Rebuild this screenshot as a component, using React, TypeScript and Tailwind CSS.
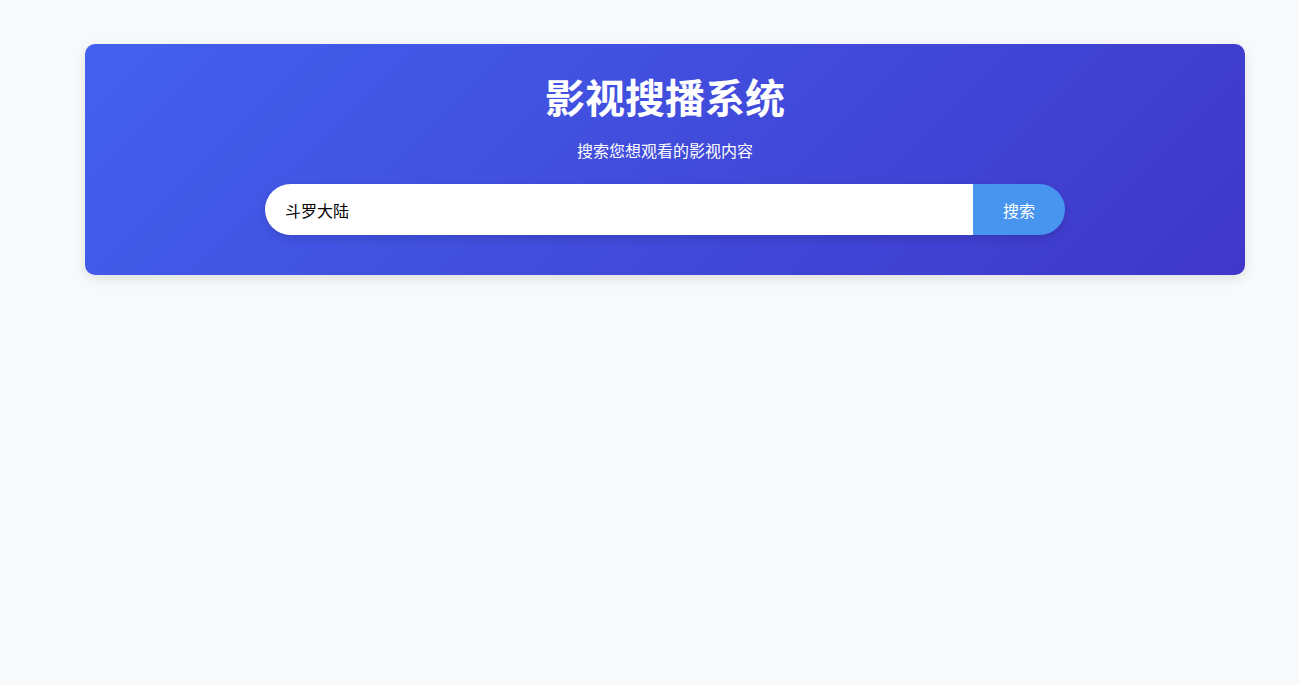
import React from "react";

export default function App() {
  return (
    <div
      className="min-h-[685px] w-full bg-[#f8f9fa] pt-[44px]"
      style={{ fontFamily: '"Noto Sans CJK SC", "Noto Sans", sans-serif' }}
    >
      <div className="ml-[85px] w-[1160px] rounded-[10px] bg-[linear-gradient(135deg,#4361ee,#3f37c9)] pt-[32px] pb-[40px] shadow-[0_4px_12px_rgba(0,0,0,0.1)] flex flex-col items-center text-white">
        <h1 className="text-[40px] leading-[40px] font-bold">影视搜播系统</h1>
        <p className="mt-[22px] text-[16px] leading-[24px] text-white">搜索您想观看的影视内容</p>
        <div className="mt-[22px] flex h-[51px] w-[800px] overflow-hidden rounded-full shadow-[0_4px_10px_rgba(0,0,0,0.12)]">
          <input
            className="h-[51px] flex-1 bg-white pl-[20px] text-[16px] text-black outline-none"
            defaultValue="斗罗大陆"
            style={{ fontFamily: '"Noto Sans CJK SC", sans-serif' }}
          />
          <button className="h-[51px] w-[92px] bg-[#4895ef] text-[16px] text-white">搜索</button>
        </div>
      </div>
    </div>
  );
}
